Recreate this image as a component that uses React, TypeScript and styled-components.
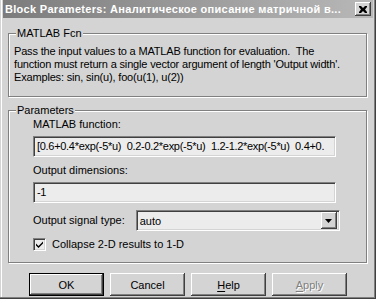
import styled, { createGlobalStyle } from 'styled-components';

const GlobalStyle = createGlobalStyle`
  html, body {
    margin: 0;
    padding: 0;
    background: #ffffff;
  }
  body {
    font-family: "Liberation Sans", Arial, sans-serif;
    font-size: 11px;
    color: #000;
  }
`;

const Window = styled.div`
  width: 376px;
  height: 299px;
  box-sizing: border-box;
  padding: 0 3px 3px 3px;
  background: #d4d4d4;
  box-shadow: inset -1px -1px #404040, inset -2px -2px #808080, inset 1px 0 #d4d4d4,
    inset 2px 0 #ffffff;
  display: flex;
  flex-direction: column;
`;

const TitleBar = styled.div`
  height: 18px;
  display: flex;
  align-items: center;
  padding: 0 2px 0 2px;
  background: linear-gradient(to right, #7c7c7c, #b8b8b8);
  color: #fff;
  font-weight: bold;
  font-size: 11px;
`;

const Title = styled.span`
  flex: 1;
  white-space: nowrap;
  overflow: hidden;
  letter-spacing: 0.3px;
`;

const CloseButton = styled.div`
  width: 16px;
  height: 14px;
  box-sizing: border-box;
  background: #d4d4d4;
  box-shadow: inset -1px -1px #404040, inset 1px 1px #ffffff, inset -2px -2px #808080;
  display: flex;
  align-items: center;
  justify-content: center;
`;

const Body = styled.div`
  display: flex;
  flex-direction: column;
  padding: 15px 0 0 5px;
`;

const Group = styled.div<{ $height: number; $top?: number }>`
  position: relative;
  width: 359px;
  height: ${(p) => p.$height}px;
  margin-top: ${(p) => p.$top ?? 0}px;
  box-sizing: border-box;
  border: 1px solid #808080;
  box-shadow: inset 1px 1px #ffffff, 1px 1px #ffffff;
`;

const Legend = styled.span`
  position: absolute;
  top: -7px;
  left: 7px;
  padding: 0 1px;
  background: #d4d4d4;
  line-height: 13px;
`;

const Description = styled.div`
  padding: 11px 0 0 5px;
  line-height: 13px;
  white-space: pre;
  letter-spacing: -0.17px;
`;

const Fields = styled.div`
  display: flex;
  flex-direction: column;
  padding: 7px 0 0 24px;
`;

const Label = styled.div<{ $top?: number }>`
  line-height: 13px;
  margin-top: ${(p) => p.$top ?? 0}px;
  white-space: nowrap;
`;

const Sunken = styled.div`
  box-sizing: border-box;
  height: 21px;
  border: 1px solid;
  border-color: #808080 #ffffff #ffffff #808080;
  box-shadow: inset 1px 1px #404040, inset -1px -1px #d4d4d4;
  background: #ececec;
`;

const TextField = styled(Sunken)<{ $top: number }>`
  width: 303px;
  margin-top: ${(p) => p.$top}px;
  padding: 0 0 0 3px;
  line-height: 19px;
  white-space: pre;
  overflow: hidden;
  letter-spacing: -0.3px;
`;

const SelectRow = styled.div`
  display: flex;
  align-items: center;
  margin-top: 7px;
`;

const Select = styled(Sunken)`
  width: 204px;
  margin-left: 11px;
  display: flex;
  align-items: center;
  padding: 0 2px 0 3px;
`;

const SelectValue = styled.span`
  flex: 1;
`;

const ArrowButton = styled.div`
  width: 16px;
  height: 17px;
  box-sizing: border-box;
  background: #d4d4d4;
  box-shadow: inset -1px -1px #404040, inset 1px 1px #ffffff, inset -2px -2px #808080;
  display: flex;
  align-items: center;
  justify-content: center;
`;

const CheckRow = styled.label`
  display: flex;
  align-items: center;
  gap: 6px;
  margin-top: 7px;
  line-height: 13px;
`;

const CheckBox = styled.span`
  width: 13px;
  height: 13px;
  box-sizing: border-box;
  border: 1px solid;
  border-color: #808080 #ffffff #ffffff #808080;
  box-shadow: inset 1px 1px #404040, inset -1px -1px #d4d4d4;
  background: #ececec;
  display: flex;
  align-items: center;
  justify-content: center;
`;

const ButtonRow = styled.div`
  display: flex;
  gap: 6px;
  margin: 10px 0 0 21px;
`;

const Button = styled.div<{ $default?: boolean; $disabled?: boolean }>`
  width: 75px;
  height: 23px;
  box-sizing: border-box;
  display: flex;
  align-items: center;
  justify-content: center;
  background: #d4d4d4;
  border: ${(p) => (p.$default ? '1px solid #000' : 'none')};
  box-shadow: inset -1px -1px #404040, inset 1px 1px #ffffff, inset -2px -2px #808080;
  color: ${(p) => (p.$disabled ? '#808080' : '#000')};
  text-shadow: ${(p) => (p.$disabled ? '1px 1px #ffffff' : 'none')};
  u {
    text-decoration-thickness: 1px;
    text-underline-offset: 2px;
  }
`;

const description = [
  'Pass the input values to a MATLAB function for evaluation.  The',
  "function must return a single vector argument of length 'Output width'.",
  'Examples: sin, sin(u), foo(u(1), u(2))',
].join('\n');

const App = () => {
  return (
    <>
      <GlobalStyle />
      <Window>
        <TitleBar>
          <Title>Block Parameters: Аналитическое описание матричной в...</Title>
          <CloseButton>
            <svg width="8" height="7" viewBox="0 0 8 7">
              <path d="M0 0h2l2 2l2-2h2v1l-2 2.5l2 2.5v1h-2l-2-2l-2 2h-2v-1l2-2.5l-2-2.5z" fill="#000" />
            </svg>
          </CloseButton>
        </TitleBar>
        <Body>
          <Group $height={64}>
            <Legend>MATLAB Fcn</Legend>
            <Description>{description}</Description>
          </Group>
          <Group $height={153} $top={13}>
            <Legend>Parameters</Legend>
            <Fields>
              <Label>MATLAB function:</Label>
              <TextField $top={5}>
                [0.6+0.4*exp(-5*u)  0.2-0.2*exp(-5*u)  1.2-1.2*exp(-5*u)  0.4+0.
              </TextField>
              <Label $top={7}>Output dimensions:</Label>
              <TextField $top={5}>-1</TextField>
              <SelectRow>
                <Label>Output signal type:</Label>
                <Select>
                  <SelectValue>auto</SelectValue>
                  <ArrowButton>
                    <svg width="7" height="4" viewBox="0 0 7 4">
                      <path d="M0 0h7l-3.5 4z" fill="#000" />
                    </svg>
                  </ArrowButton>
                </Select>
              </SelectRow>
              <CheckRow>
                <CheckBox>
                  <svg width="7" height="7" viewBox="0 0 7 7">
                    <path d="M0 2.5l2.5 2.5l4.5-4.5v2l-4.5 4.5l-2.5-2.5z" fill="#000" />
                  </svg>
                </CheckBox>
                Collapse 2-D results to 1-D
              </CheckRow>
            </Fields>
          </Group>
          <ButtonRow>
            <Button $default>OK</Button>
            <Button>Cancel</Button>
            <Button>
              <span>
                <u>H</u>elp
              </span>
            </Button>
            <Button $disabled>
              <span>
                <u>A</u>pply
              </span>
            </Button>
          </ButtonRow>
        </Body>
      </Window>
    </>
  );
};

export default App;
